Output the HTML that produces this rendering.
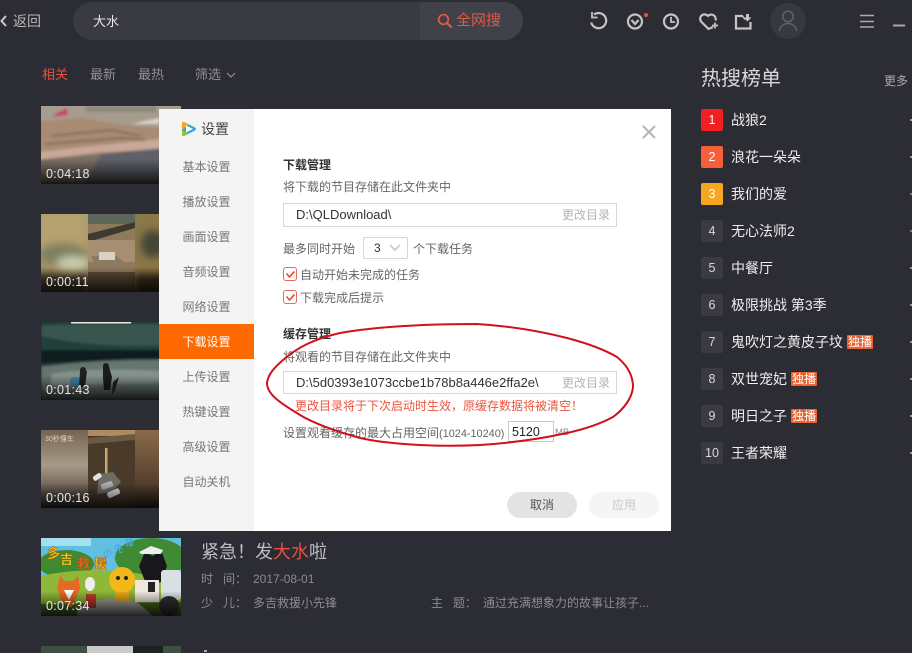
<!DOCTYPE html>
<html lang="zh"><head><meta charset="utf-8"><title>设置</title>
<style>
html,body{margin:0;padding:0;width:912px;height:653px;overflow:hidden;background:#2c2c34}
body{position:relative;font-family:"Liberation Sans","Noto Sans CJK SC",sans-serif;font-size:12px;color:#ccc}
.t{position:absolute;white-space:nowrap;line-height:18px}
.b{position:absolute;box-sizing:border-box}
.thumb{position:absolute;left:41px;width:140px;height:78px;overflow:hidden}
.thumb svg{display:block}
.dur{position:absolute;left:5px;bottom:2px;color:#e6e6e6;font-size:12.5px;line-height:16px;letter-spacing:.3px}
.side{position:absolute;left:159px;width:95px;text-align:center;color:#777;font-size:12px;line-height:18px}
.num{position:absolute;left:701px;width:22px;height:22px;border-radius:2px;background:#3a3a44;color:#d8d8d8;text-align:center;line-height:22px;font-size:12.5px}
.nm{position:absolute;left:731px;color:#eee;font-size:14px;line-height:20px;white-space:nowrap}
.tag{position:absolute;top:3px;width:26px;height:14px;line-height:14px;background:#e8622f;color:#fff;font-size:12px;text-align:center;border-radius:1px;overflow:hidden}
.dot{position:absolute;left:910px;width:2px;height:2px;background:#999}
.inp{position:absolute;left:283px;width:334px;height:24px;border:1px solid #d6d6d6;box-sizing:border-box;background:#fff;color:#333;font-size:13px;line-height:22px;padding-left:12px}
.chg{position:absolute;right:6px;top:0;color:#b4b4b4;font-size:12px}
.g{color:#666}
.chk{position:absolute;left:283px;width:14px;height:14px;border:1px solid #e56a58;border-radius:3px;box-sizing:border-box}
</style></head><body>

<!-- top bar -->
<svg class="b" style="left:0;top:14px" width="8" height="14"><path d="M6 2 1.5 7 6 12" fill="none" stroke="#ccc" stroke-width="2"/></svg>
<div class="t" style="left:13px;top:12px;font-size:14px;color:#b8b8b8">返回</div>
<div class="b" style="left:73px;top:2px;width:450px;height:38px;border-radius:19px;background:#3a3a43;overflow:hidden">
  <div class="b" style="left:347px;top:0;width:103px;height:38px;background:#41414a"></div>
</div>
<div class="t" style="left:93px;top:13px;font-size:13px;color:#e6e6e6">大水</div>
<svg class="b" style="left:437px;top:13px" width="16" height="16"><circle cx="6.5" cy="6.5" r="4.8" fill="none" stroke="#e8573f" stroke-width="1.7"/><path d="M10 10l4.500 4.500" stroke="#e8573f" stroke-width="2"/></svg>
<div class="t" style="left:456px;top:12px;font-size:15px;color:#e8573f">全网搜</div>

<svg class="b" style="left:580px;top:0" width="332" height="44" fill="none" stroke="#c4c4c4" stroke-width="2.200">
  <path d="M14 14.500a7.600 7.600 0 1 1-2.800 8"/><path d="M12 12v5.500h5.500" stroke-width="1.800"/>
  <circle cx="55" cy="21.500" r="7"/><path d="M51.500 20l3.500 4 3.500-4"/>
  <circle cx="66" cy="15" r="2" fill="#e8503f" stroke="none"/>
  <circle cx="91" cy="21.500" r="7"/><path d="M91 17v5h4" stroke-width="1.800"/>
  <path d="M133 27l-4.500 2-7-7a4.600 4.600 0 0 1 0-6.500 4.500 4.500 0 0 1 6 0l.5.500.5-.5a4.500 4.500 0 0 1 7 5"/><path d="M132 25.500h6M135 22.500v6" stroke-width="1.700"/>
  <path d="M163 16h-7v12.500h14.500v-6.500"/><path d="M162.500 16l2.500 3.500" stroke-width="1.500"/>
  <path d="M166 14h3v3.500h2.500l-4 4-4-4h2.500z" fill="#c4c4c4" stroke="none"/>
  <circle cx="208" cy="21" r="18" fill="#383840" stroke="none"/>
  <circle cx="208" cy="16.500" r="5.200" stroke="#62626a" stroke-width="1.500"/><path d="M199 31c1.500-5 5-7.500 9-7.500s7.500 2.500 9 7.500" stroke="#62626a" stroke-width="1.500"/>
  <path d="M280 15.500h14M280 21.500h14M280 27h14" stroke="#aaa" stroke-width="1.600"/>
  <path d="M313 25.500h12" stroke="#aaa" stroke-width="2"/>
</svg>

<!-- tabs -->
<div class="t" style="left:42px;top:65px;font-size:13px;color:#e8503f;padding-top:1px">相关</div>
<div class="t" style="left:90px;top:66px;font-size:13px;color:#8e8e94">最新</div>
<div class="t" style="left:138px;top:66px;font-size:13px;color:#8e8e94">最热</div>
<div class="t" style="left:195px;top:66px;font-size:13px;color:#8e8e94">筛选</div>
<svg class="b" style="left:226px;top:72px" width="10" height="7"><path d="M1 1l4 4 4-4" fill="none" stroke="#8e8e94" stroke-width="1.200"/></svg>

<!-- thumbnails -->
<div class="thumb" style="top:106px"><svg width="140" height="78">
<defs><linearGradient id="sh" x1="0" y1="0" x2="0" y2="1"><stop offset=".68" stop-color="#000" stop-opacity="0"/><stop offset="1" stop-color="#000" stop-opacity=".8"/></linearGradient>
<filter id="bl"><feGaussianBlur stdDeviation="1.200"/></filter><filter id="bl2" x="-30%" y="-30%" width="160%" height="160%"><feGaussianBlur stdDeviation="4"/></filter></defs>
<g filter="url(#bl)"><rect x="-5" y="-5" width="150" height="90" fill="#a59c8e"/>
<path d="M-5 16 40 12 90 20 118 22 145 30V90H-5z" fill="#a98a72"/>
<path d="M10 30 70 24 100 30M4 38 80 32 105 34" stroke="#7c6350" stroke-width="1.500" fill="none"/>
<path d="M-5 46 70 38 145 30V42L60 46-5 54z" fill="#c8a898"/>
<path d="M46 56 60 48 145 40V85H30z" fill="#5e6168"/>
<path d="M-5 54 60 48 40 85H-5z" fill="#7a7065"/>
<path d="M14 8 26 2 27 9 12 11z" fill="#c8446c"/><path d="M90 18l28-6v6z" fill="#dcd2c6"/><rect x="45" y="0" width="70" height="6" fill="#7f7c72" opacity=".6"/></g>
<rect width="140" height="78" fill="url(#sh)"/></svg><div class="dur">0:04:18</div></div>

<div class="thumb" style="top:214px"><svg width="140" height="78">
<rect width="140" height="78" fill="#a59264"/>
<g filter="url(#bl2)"><rect x="-5" y="-5" width="52" height="45" fill="#b5a06e"/><ellipse cx="22" cy="40" rx="24" ry="11" fill="#7c8060"/><ellipse cx="32" cy="49" rx="16" ry="7" fill="#c8ccac"/><rect x="-5" y="60" width="52" height="22" fill="#4a3d2a"/></g>
<rect x="47" width="47" height="78" fill="#907a5c"/><rect x="47" width="47" height="10" fill="#5c665a"/><path d="M47 20 94 8V14L47 28z" fill="#3e3a32"/><rect x="47" y="26" width="47" height="22" fill="#a88e70"/><path d="M50 42h26l14 12-30 8z" fill="#8c7a62"/><rect x="58" y="38" width="16" height="8" fill="#d8d2c4"/><rect x="47" y="58" width="47" height="20" fill="#5e4c36"/>
<rect x="94" width="46" height="78" fill="#8a7846"/><g filter="url(#bl2)"><ellipse cx="112" cy="30" rx="12" ry="14" fill="#454536"/><rect x="94" y="60" width="46" height="20" fill="#3a2e1e"/></g>
<rect width="140" height="78" fill="url(#sh)"/></svg><div class="dur">0:00:11</div></div>

<div class="thumb" style="top:322px"><svg width="140" height="78">
<rect width="140" height="78" fill="#1c2e2a"/>
<g filter="url(#bl)"><rect y="0" width="140" height="40" fill="#22403a"/><path d="M0 4Q50 0 140 3V22Q60 28 0 14z" fill="#37564e"/><rect y="28" width="140" height="12" fill="#101c1a"/>
<path d="M0 44Q70 36 140 38V80H0z" fill="#65746f"/><path d="M10 52Q60 44 140 50V60Q70 62 10 64z" fill="#8c9a96" opacity=".8"/></g>
<rect x="30" y="0" width="60" height="1.500" fill="#e8ece4"/>
<rect x="29" y="55" width="11" height="9" rx="4" fill="#3e84a2"/><path d="M39 49h7l-2 16h-6z" fill="#20201e"/><circle cx="42" cy="48" r="3" fill="#20201e"/><path d="M62 45h6l3 10-2 13h-6l-1-12z" fill="#1a1c1c"/><circle cx="65" cy="44" r="3" fill="#1a1c1c"/><path d="M72 60l6-5-4 13-3 5z" fill="#222"/>
<rect width="140" height="78" fill="url(#sh)"/></svg><div class="dur">0:01:43</div></div>

<div class="thumb" style="top:430px"><svg width="140" height="78">
<defs><linearGradient id="l" x1="0" y1="0" x2="0" y2="1"><stop offset="0" stop-color="#75644f"/><stop offset=".45" stop-color="#a89a88"/><stop offset=".75" stop-color="#6c6055"/><stop offset="1" stop-color="#3c3632"/></linearGradient>
<linearGradient id="r" x1="0" y1="0" x2="0" y2="1"><stop offset="0" stop-color="#8c6a4a"/><stop offset="1" stop-color="#3a2c20"/></linearGradient></defs>
<rect width="48" height="78" fill="url(#l)"/><rect x="94" width="46" height="78" fill="url(#r)"/>
<rect x="47" width="47" height="78" fill="#4a3a2a"/><rect x="47" width="47" height="6" fill="#b08a60"/><path d="M47 8 94 4V10L47 14z" fill="#6a5a44"/><rect x="64" y="18" width="2.500" height="26" fill="#c8a878"/>
<path d="M58 44l14-2 8 10-10 10-14 2z" fill="#6e6a64"/><rect x="52" y="44" width="9" height="5" rx="2" fill="#e0e4e4" transform="rotate(-35 57 47)"/><rect x="60" y="52" width="12" height="6" rx="2" fill="#a8aeb2" transform="rotate(-20 67 55)"/><rect x="66" y="60" width="13" height="6" rx="2" fill="#e4e6e6" transform="rotate(-25 73 63)"/>
<text x="4" y="11" font-size="7" fill="#d8d0c4">30秒懂车</text>
<rect width="140" height="78" fill="url(#sh)"/></svg><div class="dur">0:00:16</div></div>

<div class="thumb" style="top:538px"><svg width="140" height="78">
<rect width="140" height="78" fill="#63bfe0"/><rect width="50" height="8" fill="#a4dff0"/>
<ellipse cx="110" cy="20" rx="36" ry="20" fill="#3f8a32"/><ellipse cx="25" cy="26" rx="28" ry="14" fill="#3f8a2c"/>
<path d="M0 38Q60 24 140 44V78H0z" fill="#8fb838"/><path d="M0 66 140 64V78H0z" fill="#4a6a22"/><path d="M36 72q28-18 60-8l16 14H36z" fill="#a8a8a4"/>
<path d="M19 38l5 5h8l5-5 2 12-5 12-4 8-10-8-4-12z" fill="#e66a22"/><path d="M23 52h10l-5 10z" fill="#fff"/>
<ellipse cx="49" cy="46" rx="5" ry="7" fill="#eee"/><rect x="45" y="56" width="10" height="14" fill="#c03a30"/>
<ellipse cx="81" cy="42" rx="13" ry="13" fill="#f2b818"/><circle cx="77" cy="40" r="2" fill="#222"/><circle cx="85" cy="40" r="2" fill="#222"/><rect x="74" y="54" width="14" height="10" fill="#e8a818"/>
<path d="M98 28l6-14 8 4 8-6 6 16-6 16-14 4z" fill="#18181c"/><path d="M98 14l12-6 12 4-2 4h-20z" fill="#eee"/>
<rect x="94" y="42" width="24" height="22" fill="#f0e8e0"/><rect x="107" y="44" width="7" height="10" fill="#222"/><rect x="120" y="32" width="20" height="30" rx="3" fill="#d8e0e4"/><circle cx="128" cy="68" r="10" fill="#333"/>
<g font-size="13" font-weight="bold" stroke="#a84818" stroke-width=".4"><text x="6" y="20" fill="#f0c818">多</text><text x="19" y="26" fill="#f0d830">吉</text><text x="36" y="30" fill="#e86818">救</text><text x="53" y="30" fill="#e8b820">援</text></g>
<g font-size="9" fill="#4aa8e0" font-weight="bold"><text x="62" y="18">小</text><text x="73" y="14">先</text><text x="84" y="8">锋</text></g>
<rect width="140" height="78" fill="url(#sh)"/></svg><div class="dur">0:07:34</div></div>

<div class="thumb" style="top:646px;height:7px"><svg width="140" height="7"><rect width="140" height="7" fill="#3c5044"/><rect x="46" width="46" height="7" fill="#c8cac8"/><rect x="92" width="30" height="7" fill="#1c2420"/></svg></div>
<div class="b" style="left:204px;top:650px;width:3px;height:2px;background:#aaa"></div>

<!-- result text -->
<div class="t" style="left:201px;top:540px;font-size:18px;line-height:24px;color:#bdbdc0">紧急！发<span style="color:#e8503f">大水</span>啦</div>
<div class="t" style="left:201px;top:570px;color:#8b8b90">时&nbsp;&nbsp;&nbsp;间：</div>
<div class="t" style="left:253px;top:570px;color:#8b8b90">2017-08-01</div>
<div class="t" style="left:201px;top:594px;color:#8b8b90">少&nbsp;&nbsp;&nbsp;儿：</div>
<div class="t" style="left:253px;top:594px;color:#8b8b90">多吉救援小先锋</div>
<div class="t" style="left:431px;top:594px;color:#8b8b90">主&nbsp;&nbsp;&nbsp;题：</div>
<div class="t" style="left:483px;top:594px;color:#8b8b90">通过充满想象力的故事让孩子...</div>

<!-- hot list -->
<div class="t" style="left:701px;top:66px;font-size:20px;line-height:26px;color:#d8d8d8">热搜榜单</div>
<div class="t" style="left:884px;top:72px;font-size:12px;color:#aaa">更多</div>

<div class="num" style="top:109px;background:#f02020;color:#fff">1</div><div class="nm" style="top:110px">战狼2</div><div class="dot" style="top:119px"></div>
<div class="num" style="top:146px;background:#f56038;color:#fff">2</div><div class="nm" style="top:147px">浪花一朵朵</div><div class="dot" style="top:156px"></div>
<div class="num" style="top:183px;background:#f5a623;color:#fff">3</div><div class="nm" style="top:184px">我们的爱</div><div class="dot" style="top:193px;background:#a8703a"></div>
<div class="num" style="top:220px">4</div><div class="nm" style="top:221px">无心法师2</div><div class="dot" style="top:230px;background:#a8703a"></div>
<div class="num" style="top:257px">5</div><div class="nm" style="top:258px">中餐厅</div><div class="dot" style="top:267px"></div>
<div class="num" style="top:294px">6</div><div class="nm" style="top:295px">极限挑战 第3季</div><div class="dot" style="top:304px;background:#a89a5a"></div>
<div class="num" style="top:331px">7</div><div class="nm" style="top:332px;width:150px">鬼吹灯之黄皮子坟<span class="tag" style="left:116px">独播</span></div><div class="dot" style="top:341px"></div>
<div class="num" style="top:368px">8</div><div class="nm" style="top:369px;width:100px">双世宠妃<span class="tag" style="left:60px">独播</span></div><div class="dot" style="top:378px"></div>
<div class="num" style="top:405px">9</div><div class="nm" style="top:406px;width:100px">明日之子<span class="tag" style="left:60px">独播</span></div><div class="dot" style="top:415px"></div>
<div class="num" style="top:442px">10</div><div class="nm" style="top:443px">王者荣耀</div><div class="dot" style="top:452px"></div>

<!-- dialog -->
<div class="b" style="left:159px;top:109px;width:512px;height:422px;background:#fff"></div>
<div class="b" style="left:159px;top:109px;width:95px;height:422px;background:#f4f4f5"></div>
<svg class="b" style="left:181px;top:121px" width="16" height="16"><path d="M1 2.500Q1 .5 3 1L14 6.500Q16 8 14 9.500L3 15Q1 15.500 1 13.500z" fill="#2aa8e0"/><path d="M1 2.500Q1 .5 3 1L8 3.500 1 9z" fill="#f5a623"/><path d="M1 9 8 13 3 15Q1 15.500 1 13.500z" fill="#8cc63f"/><path d="M5 4.500 12 8 5 11.500z" fill="#fff"/></svg>
<div class="t" style="left:201px;top:120px;font-size:14px;color:#444">设置</div>
<div class="side" style="top:158px">基本设置</div>
<div class="side" style="top:193px">播放设置</div>
<div class="side" style="top:228px">画面设置</div>
<div class="side" style="top:263px">音频设置</div>
<div class="side" style="top:298px">网络设置</div>
<div class="b" style="left:159px;top:324px;width:95px;height:35px;background:#ff6a00"></div>
<div class="side" style="top:333px;color:#fff">下载设置</div>
<div class="side" style="top:368px">上传设置</div>
<div class="side" style="top:403px">热键设置</div>
<div class="side" style="top:438px">高级设置</div>
<div class="side" style="top:473px">自动关机</div>

<svg class="b" style="left:642px;top:125px" width="14" height="14"><path d="M1 1l12 12M13 1 1 13" stroke="#b4b4b4" stroke-width="2"/></svg>

<div class="t" style="left:283px;top:156px;font-weight:bold;color:#333">下载管理</div>
<div class="t g" style="left:283px;top:178px">将下载的节目存储在此文件夹中</div>
<div class="inp" style="top:203px">D:\QLDownload\<span class="chg">更改目录</span></div>
<div class="t g" style="left:283px;top:240px">最多同时开始</div>
<div class="b" style="left:363px;top:237px;width:45px;height:22px;border:1px solid #d6d6d6;border-radius:2px;color:#333;line-height:20px;padding-left:10px">3</div>
<svg class="b" style="left:389px;top:244px" width="12" height="8"><path d="M1 1l5 5 5-5" fill="none" stroke="#c8c8c8" stroke-width="1.600"/></svg>
<div class="t g" style="left:413px;top:240px">个下载任务</div>

<div class="chk" style="top:267px"></div>
<svg class="b" style="left:285px;top:270px" width="11" height="9"><path d="M1.500 3.500 4.500 7 9.500 1.500" fill="none" stroke="#e8563f" stroke-width="1.700"/></svg>
<div class="t g" style="left:300px;top:266px">自动开始未完成的任务</div>
<div class="chk" style="top:290px"></div>
<svg class="b" style="left:285px;top:293px" width="11" height="9"><path d="M1.500 3.500 4.500 7 9.500 1.500" fill="none" stroke="#e8563f" stroke-width="1.700"/></svg>
<div class="t g" style="left:300px;top:289px">下载完成后提示</div>

<div class="t" style="left:283px;top:325px;font-weight:bold;color:#333">缓存管理</div>
<div class="t g" style="left:283px;top:348px">将观看的节目存储在此文件夹中</div>
<div class="inp" style="top:371px;height:23px">D:\5d0393e1073ccbe1b78b8a446e2ffa2e\<span class="chg">更改目录</span></div>
<div class="t" style="left:295px;top:397px;color:#e8563f">更改目录将于下次启动时生效，原缓存数据将被清空！</div>
<div class="t g" style="left:283px;top:424px">设置观看缓存的最大占用空间<span style="font-size:10.900px">(1024-10240)</span></div>
<div class="b" style="left:508px;top:421px;width:46px;height:21px;border:1px solid #c8c8c8;color:#222;line-height:21px;padding-left:3px;font-size:12.500px">5120</div>
<div class="t" style="left:555px;top:424px;font-size:9.500px;color:#888">MB</div>

<div class="b" style="left:507px;top:492px;width:70px;height:26px;border-radius:13px;background:#e3e3e3;color:#555;text-align:center;line-height:26px">取消</div>
<div class="b" style="left:589px;top:492px;width:70px;height:26px;border-radius:13px;background:#f5f5f5;color:#c8c8c8;text-align:center;line-height:26px">应用</div>

<!-- red annotation ellipse -->
<svg class="b" style="left:0;top:0;pointer-events:none" width="912" height="653"><path d="M283 360C298 347 314 339 340 333C380 326 430 324 477 324C510 326 540 331 567 338C590 344 605 350 617 357C628 366 633 376 633 387C632 398 624 409 613 417C600 424 585 429 567 433C540 439 510 443 480 445C460 446 440 446 420 445C398 444 378 442 360 438C335 431 315 424 300 415C282 404 267 395 267 383C268 374 275 367 283 360Z" fill="none" stroke="#d2101c" stroke-width="2"/></svg>
</body></html>
